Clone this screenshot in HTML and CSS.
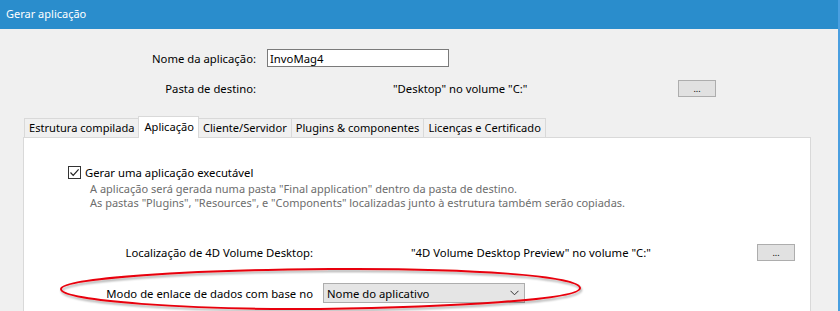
FILE: index.html
```html
<!DOCTYPE html>
<html lang="pt">
<head>
  <meta charset="UTF-8" />
  <title>Gerar aplicação</title>
  <link rel="stylesheet" href="styles.css">
</head>
<body>
  <div class="window">
    <div class="titlebar">Gerar aplicação</div>

    <div class="form">
      <div class="row row-name">
        <span class="label top-label">Nome da aplicação:</span>
        <input type="text" class="name-input" value="InvoMag4" />
      </div>
      <div class="row row-dest">
        <span class="label top-label">Pasta de destino:</span>
        <span class="value dest-value">"Desktop" no volume "C:"</span>
        <button class="dots-button dest-button">...</button>
      </div>

      <div class="tabs">
        <div class="tab">Estrutura compilada</div>
        <div class="tab active">Aplicação</div>
        <div class="tab">Cliente/Servidor</div>
        <div class="tab">Plugins &amp; componentes</div>
        <div class="tab">Licenças e Certificado</div>
      </div>

      <div class="panel">
        <label class="check-row">
          <span class="checkbox">
            <svg width="11" height="11" viewBox="0 0 11 11"><path d="M1.5 5.5 L4.2 8.3 L9.6 2.4" fill="none" stroke="#222" stroke-width="1.2" /></svg>
          </span>
          Gerar uma aplicação executável
        </label>
        <p class="hint">
          A aplicação será gerada numa pasta "Final application" dentro da pasta de destino.<br>
          As pastas "Plugins", "Resources", e "Components" localizadas junto à estrutura também serão copiadas.
        </p>

        <div class="row row-volume">
          <span class="label panel-label">Localização de 4D Volume Desktop:</span>
          <span class="value volume-value">"4D Volume Desktop Preview" no volume "C:"</span>
          <button class="dots-button volume-button">...</button>
        </div>
        <div class="row row-mode">
          <span class="label panel-label">Modo de enlace de dados com base no</span>
          <div class="select">
            <span>Nome do aplicativo</span>
            <svg width="9" height="6" viewBox="0 0 9 6"><path d="M0.5 0.8 L4.5 4.8 L8.5 0.8" fill="none" stroke="#333" stroke-width="1" /></svg>
          </div>
        </div>
      </div>
    </div>
  </div>

  <!-- hand drawn highlight over the data link mode row -->
  <svg class="marker" width="840" height="311" viewBox="0 0 840 311">
    <defs>
      <filter id="shade" x="-5%" y="-20%" width="110%" height="140%">
        <feDropShadow dx="1" dy="2" stdDeviation="1.2" flood-color="#000" flood-opacity="0.35" />
      </filter>
    </defs>
    <path d="M61 289 C 62 278, 190 270, 330 269 C 470 268, 580 276, 580 288 C 580 300, 450 307, 320 309 C 190 310, 60 301, 61 289 Z"
          fill="none" stroke="#e8000b" stroke-width="2" filter="url(#shade)" />
  </svg>
</body>
</html>
```

FILE: styles.css
```css
body {
  margin: 0;
  background-color: #f0f0f0;
  font-family: "Noto Sans", "Open Sans", sans-serif;
  font-size: 11.3px;
  color: #000;
  overflow: hidden;
}
.window {
  height: 311px;
  border-right: 2px solid #4a9fe0;
  box-sizing: border-box;
  overflow: hidden;
}
.titlebar {
  height: 29px;
  background-color: #2a8dcc;
  color: #fff;
  font-size: 11px;
  line-height: 28px;
  padding-left: 6px;
}
.row {
  display: flex;
  align-items: center;
}
.label {
  text-align: right;
  flex: none;
}
.top-label {
  width: 256px;
}
.row-name {
  margin-top: 20px;
  height: 18px;
}
.name-input {
  margin: 0 0 0 11px;
  width: 182px;
  height: 18px;
  box-sizing: border-box;
  border: 1px solid #7a7a7a;
  padding: 0 2px;
  font: inherit;
}
.row-dest {
  margin-top: 13px;
  height: 17px;
}
.dest-value {
  margin-left: 137px;
  width: 285px;
}
.dots-button {
  flex: none;
  width: 38px;
  height: 17px;
  box-sizing: border-box;
  background-color: #e1e1e1;
  border: 1px solid #adadad;
  padding: 0;
  font: inherit;
  font-size: 9px;
  line-height: 12px;
}
.tabs {
  display: flex;
  align-items: flex-end;
  margin: 18px 0 0 24px;
  height: 22px;
  position: relative;
  z-index: 1;
  font-size: 11.1px;
}
.tab {
  height: 19px;
  line-height: 18px;
  box-sizing: border-box;
  border: 1px solid #d9d9d9;
  border-bottom: none;
  padding: 0 4px;
  margin-right: -1px;
  background-color: #f0f0f0;
}
.tab.active {
  height: 22px;
  line-height: 19px;
  background-color: #fff;
  margin-bottom: -1px;
  padding: 0 4px 0 5px;
}
.panel {
  margin-left: 23px;
  width: 788px;
  height: 175px;
  box-sizing: border-box;
  border: 1px solid #d9d9d9;
  background-color: #fff;
}
.check-row {
  display: flex;
  align-items: center;
  margin: 27px 0 0 44px;
  height: 14px;
}
.checkbox {
  width: 13px;
  height: 13px;
  box-sizing: border-box;
  border: 1px solid #333;
  margin-right: 4px;
  display: flex;
  align-items: center;
  justify-content: center;
}
.hint {
  margin: 3px 0 0 66px;
  line-height: 14px;
  color: #6d6d6d;
  font-size: 11px;
}
.panel-label {
  width: 289px;
}
.row-volume {
  margin-top: 34px;
  height: 17px;
}
.volume-value {
  margin-left: 98px;
  width: 346px;
}
.row-mode {
  margin-top: 22px;
  height: 20px;
}
.select {
  margin-left: 10px;
  width: 202px;
  height: 20px;
  box-sizing: border-box;
  border: 1px solid #adadad;
  background-color: #e5e5e5;
  display: flex;
  align-items: center;
  justify-content: space-between;
  padding: 0 5px 0 3px;
}
.marker {
  position: absolute;
  left: 0;
  top: 0;
  pointer-events: none;
}
```
